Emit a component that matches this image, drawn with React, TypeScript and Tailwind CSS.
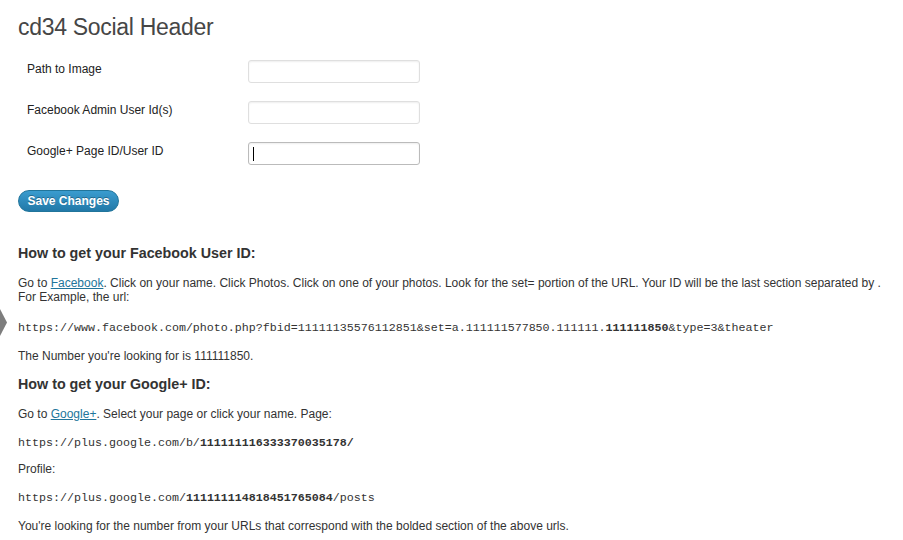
export default function App() {
  const sans = "font-['Liberation_Sans',Arial,sans-serif]";
  return (
    <div className={`relative min-h-[540px] w-[903px] bg-white ${sans} text-[#333]`}>
      {/* admin menu current indicator */}
      <svg className="absolute left-0 top-[309px]" width="8" height="27" viewBox="0 0 8 27">
        <polygon points="0,0 7,13.5 0,27" fill="#7d7d7d" />
      </svg>

      <div className="pl-[18px] pr-4">
        <h2 className="pt-[13px] text-[23px] leading-[29px] tracking-[-0.3px] text-[#464646]">
          cd34 Social Header
        </h2>

        <div className="mt-[18px] flex flex-col gap-[18px]">
          {[
            { label: "Path to Image", focus: false },
            { label: "Facebook Admin User Id(s)", focus: false },
            { label: "Google+ Page ID/User ID", focus: true },
          ].map((row) => (
            <div key={row.label} className="flex items-start">
              <div className="w-[230px] pl-[9px] pt-[2px] text-[12px] leading-[15px] text-[#222]">
                {row.label}
              </div>
              <div
                className={`relative h-[23px] w-[172px] rounded-[3px] border bg-white shadow-[inset_0_1px_2px_rgba(0,0,0,0.07)] ${
                  row.focus ? "border-[#bbb]" : "border-[#dfdfdf]"
                }`}
              >
                {row.focus && <span className="absolute left-[4px] top-[4px] h-[14px] w-px bg-black" />}
              </div>
            </div>
          ))}
        </div>

        <button className="mt-[25px] h-[22px] w-[101px] rounded-full border border-[#21759b] bg-gradient-to-b from-[#3a9ccf] to-[#2279a8] text-[12px] font-bold leading-[20px] text-white [text-shadow:0_-1px_0_rgba(0,0,0,0.3)]">
          Save Changes
        </button>

        <h3 className="mt-[33px] text-[14.3px] font-bold leading-[17px] text-[#333]">
          How to get your Facebook User ID:
        </h3>
        <div className="text-[12px] leading-[14px]">
          <p className="mt-[14px]">
            Go to <a className="text-[#21759b] underline">Facebook</a>. Click on your name. Click Photos. Click on one of your photos. Look for the set= portion of the URL. Your ID will be the last section separated by .
            <br />
            For Example, the url:
          </p>
          <p className="mt-[17px] font-['Liberation_Mono',monospace] text-[11.67px]">
            https://www.facebook.com/photo.php?fbid=11111135576112851&amp;set=a.111111577850.111111.<b>111111850</b>&amp;type=3&amp;theater
          </p>
          <p className="mt-[14px]">The Number you're looking for is 111111850.</p>
        </div>

        <h3 className="mt-[13px] text-[14.3px] font-bold leading-[17px] text-[#333]">
          How to get your Google+ ID:
        </h3>
        <div className="text-[12px] leading-[14px]">
          <p className="mt-[14px]">
            Go to <a className="text-[#21759b] underline">Google+</a>. Select your page or click your name. Page:
          </p>
          <p className="mt-[15px] font-['Liberation_Mono',monospace] text-[11.67px]">
            https://plus.google.com/b/<b>111111116333370035178/</b>
          </p>
          <p className="mt-[12px]">Profile:</p>
          <p className="mt-[15px] font-['Liberation_Mono',monospace] text-[11.67px]">
            https://plus.google.com/<b>111111114818451765084</b>/posts
          </p>
          <p className="mt-[14px]">
            You're looking for the number from your URLs that correspond with the bolded section of the above urls.
          </p>
        </div>
      </div>
    </div>
  );
}
